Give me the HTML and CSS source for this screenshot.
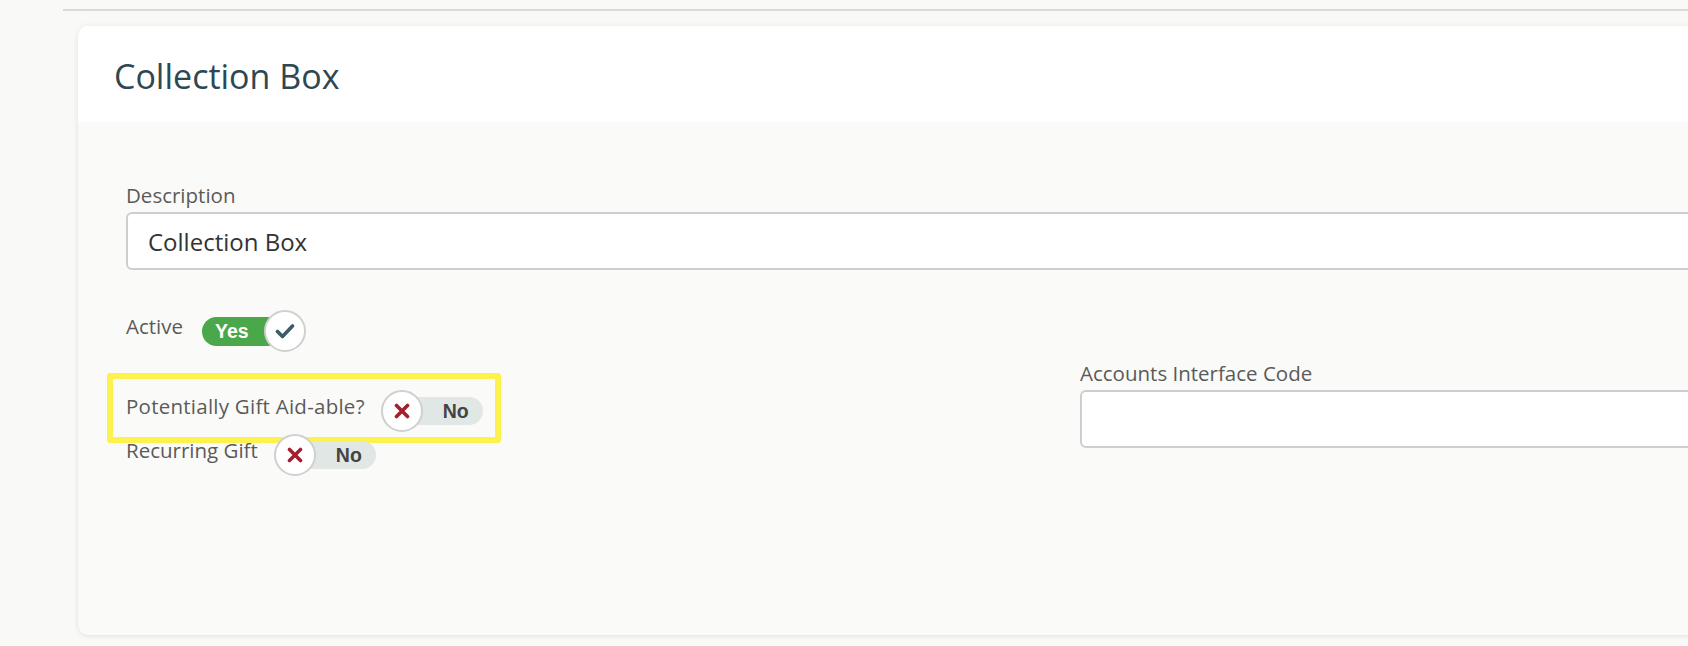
FILE: index.html
```html
<!DOCTYPE html>
<html lang="en">
<head>
<meta charset="utf-8">
<title>Collection Box</title>
<link rel="stylesheet" href="styles.css">
</head>
<body>
<div class="page">
  <div class="rule"></div>
  <section class="card">
    <header class="card-header">
      <h1 class="title">Collection Box</h1>
    </header>
    <div class="card-body">
      <div class="field">
        <label class="label">Description</label>
        <div class="input">Collection Box</div>
      </div>
      <div class="grid">
        <div class="col-left">
          <div class="row row-active">
            <span class="label">Active</span>
            <span class="switch on">
              <span class="track">Yes</span>
              <span class="knob">
                <svg width="20" height="20" viewBox="0 0 20 20"><path d="M2.5 10.5 L7.5 15.5 L17.5 5" fill="none" stroke="#3b5c68" stroke-width="3.6" stroke-linecap="round" stroke-linejoin="round"/></svg>
              </span>
            </span>
          </div>
          <div class="highlight">
            <div class="row row-gift">
              <span class="label">Potentially Gift Aid-able?</span>
              <span class="switch off">
                <span class="knob">
                  <svg width="16" height="16" viewBox="0 0 16 16"><path d="M2.5 2.5 L13.5 13.5 M13.5 2.5 L2.5 13.5" fill="none" stroke="#a51f2e" stroke-width="3.6" stroke-linecap="round"/></svg>
                </span>
                <span class="track">No</span>
              </span>
            </div>
          </div>
          <div class="row row-recurring">
            <span class="label">Recurring Gift</span>
            <span class="switch off">
              <span class="knob">
                <svg width="16" height="16" viewBox="0 0 16 16"><path d="M2.5 2.5 L13.5 13.5 M13.5 2.5 L2.5 13.5" fill="none" stroke="#a51f2e" stroke-width="3.6" stroke-linecap="round"/></svg>
              </span>
              <span class="track">No</span>
            </span>
          </div>
        </div>
        <div class="col-right">
          <div class="field">
            <label class="label">Accounts Interface Code</label>
            <div class="input"></div>
          </div>
        </div>
      </div>
    </div>
  </section>
</div>
</body>
</html>
```

FILE: styles.css
```css
html, body {
  margin: 0;
  padding: 0;
}
body {
  background: #f9f9f7;
  font-family: "Open Sans", "Noto Sans", sans-serif;
  overflow: hidden;
  width: 1688px;
  height: 646px;
}
.page {
  padding: 9px 0 0 63px;
}
.rule {
  height: 2px;
  background: #dadad8;
}
.card {
  margin: 15px 0 0 15px;
  width: 1700px;
  height: 609px;
  border-radius: 10px;
  background: #fafaf8;
  box-shadow: 0 0 6px rgba(0, 0, 0, 0.07), 0 2px 4px rgba(0, 0, 0, 0.04);
}
.card-header {
  height: 96px;
  box-sizing: border-box;
  background: #ffffff;
  border-radius: 10px 10px 0 0;
  padding: 27px 0 0 36px;
}
.title {
  margin: 0;
  font-size: 34px;
  line-height: 46px;
  font-weight: 400;
  color: #2e4753;
}
.card-body {
  padding: 59px 0 0 48px;
}
.label {
  display: block;
  font-size: 20.5px;
  line-height: 28px;
  color: #5a5a5a;
  white-space: nowrap;
}
.field .label {
  margin-bottom: 3px;
}
.input {
  box-sizing: border-box;
  height: 58px;
  border: 2px solid #cecece;
  border-radius: 6px;
  background: #ffffff;
  padding-left: 20px;
  display: flex;
  align-items: center;
  font-size: 24px;
  color: #333333;
}
.grid {
  display: grid;
  grid-template-columns: 954px 1fr;
  margin-top: 40px;
}
.col-left {
  display: flex;
  flex-direction: column;
  align-items: flex-start;
}
.col-right {
  margin-top: 49px;
}
.row {
  display: flex;
  align-items: flex-start;
  gap: 16px;
}
.row .label {
  margin-top: 2px;
}
.row-active {
  gap: 19px;
}
.row-gift .label {
  letter-spacing: 0.25px;
}
.highlight {
  margin: 21px 0 0 -19px;
  border: 6px solid #fdf14e;
  border-radius: 3px;
  padding: 11px 12px 5px 13px;
}
.row-recurring {
  margin-top: -9px;
  position: relative;
  z-index: 1;
}
.switch {
  display: inline-flex;
  align-items: center;
  height: 42px;
  font-family: "Liberation Sans", Arial, sans-serif;
  font-weight: 700;
  font-size: 19.5px;
}
.track {
  display: flex;
  align-items: center;
  box-sizing: border-box;
}
.knob {
  position: relative;
  z-index: 1;
  box-sizing: border-box;
  width: 42px;
  height: 42px;
  border-radius: 50%;
  border: 2px solid #d0d0d0;
  background: #ffffff;
  display: flex;
  align-items: center;
  justify-content: center;
  flex: none;
}
.switch.on .track {
  width: 80px;
  height: 29px;
  border-radius: 15px;
  background: #4aa74a;
  color: #ffffff;
  padding-left: 13px;
}
.switch.on .knob {
  margin-left: -18px;
}
.switch.off .track {
  width: 102px;
  height: 28px;
  margin-left: -42px;
  border-radius: 14px;
  background: #e1e7e4;
  color: #444444;
  padding-left: 62px;
}
```
